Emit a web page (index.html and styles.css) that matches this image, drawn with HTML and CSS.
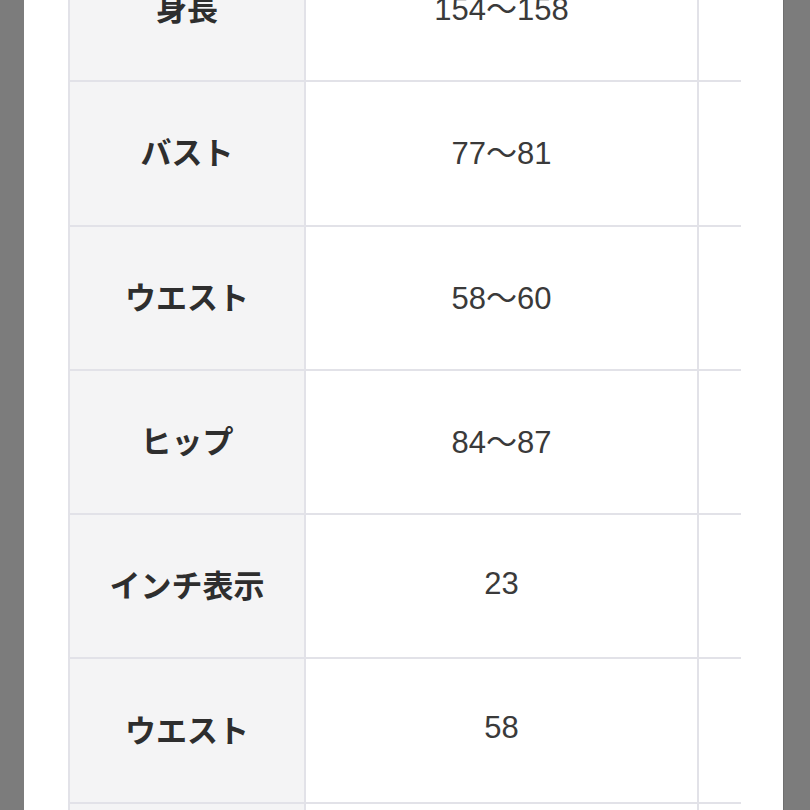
FILE: index.html
```html
<!DOCTYPE html>
<html lang="ja">
<head>
<meta charset="utf-8">
<title>サイズ表</title>
<link rel="stylesheet" href="styles.css">
</head>
<body>
<div class="frame">
  <div class="side side-left"></div>
  <main class="sheet">
    <table class="size-table">
      <colgroup>
        <col class="c-head">
        <col class="c-val">
        <col class="c-extra">
      </colgroup>
      <tbody>
        <tr><th>身長</th><td>154〜158</td><td class="extra"></td></tr>
        <tr><th>バスト</th><td>77〜81</td><td class="extra"></td></tr>
        <tr><th>ウエスト</th><td>58〜60</td><td class="extra"></td></tr>
        <tr><th>ヒップ</th><td>84〜87</td><td class="extra"></td></tr>
        <tr><th>インチ表示</th><td>23</td><td class="extra"></td></tr>
        <tr><th>ウエスト</th><td>58</td><td class="extra"></td></tr>
        <tr><th></th><td></td><td class="extra"></td></tr>
      </tbody>
    </table>
  </main>
  <div class="side side-right"></div>
</div>
</body>
</html>
```

FILE: styles.css
```css
html, body {
  margin: 0;
  padding: 0;
  background: #ffffff;
  height: 100%;
  overflow: hidden;
}

.frame {
  display: flex;
  height: 810px;
  overflow: hidden;
}

.side {
  flex: none;
  background: #7c7c7c;
}

.side-left {
  width: 24px;
}

.side-right {
  width: 27px;
  border-left: 1px solid #6f6f6f;
  box-sizing: border-box;
}

.sheet {
  flex: 1;
  background: #ffffff;
  padding-left: 44px;
  overflow: hidden;
}

.size-table {
  margin-top: -62px;
  border-collapse: separate;
  border-spacing: 0;
  table-layout: fixed;
  width: 673px;
  border-left: 2px solid #e2e2e8;
  font-family: "Liberation Sans", "Noto Sans CJK JP", sans-serif;
  color: #333333;
}

.c-head { width: 236px; }
.c-val { width: 393px; }
.c-extra { width: 42px; }

.size-table tr {
  height: 144.3px;
}

.size-table th,
.size-table td {
  padding: 0 0 5px 0;
  text-align: center;
  vertical-align: middle;
  border-bottom: 2px solid #e2e2e8;
  border-right: 2px solid #e2e2e8;
}

.size-table th {
  background: #f4f4f5;
  font-family: "Noto Sans CJK JP", sans-serif;
  font-weight: 700;
  font-size: 31px;
  color: #2e2e2e;
}

.size-table td {
  background: #ffffff;
  font-size: 31px;
  font-weight: 400;
  color: #3a3a3a;
}

.size-table td.extra {
  border-right: none;
}
```
